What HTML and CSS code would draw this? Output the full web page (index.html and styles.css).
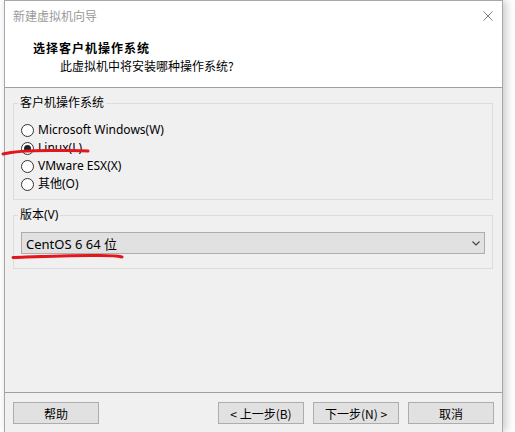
FILE: index.html
```html
<!DOCTYPE html>
<html lang="zh-CN">
<head>
<meta charset="utf-8">
<title>新建虚拟机向导</title>
<link rel="stylesheet" href="styles.css">
</head>
<body>
<div class="window">
  <div class="titlebar">
    <span class="title">新建虚拟机向导</span>
    <svg class="close" width="10" height="10" viewBox="0 0 10 10"><path d="M0.5 0.5 L9.5 9.5 M9.5 0.5 L0.5 9.5" stroke="#808080" stroke-width="1" fill="none"/></svg>
  </div>
  <div class="header">
    <div class="h-title">选择客户机操作系统</div>
    <div class="h-sub">此虚拟机中将安装哪种操作系统?</div>
  </div>
  <div class="body">
    <fieldset class="group g1">
      <legend>客户机操作系统</legend>
      <div class="radio"><span class="dot"></span>Microsoft Windows(W)</div>
      <div class="radio checked"><span class="dot"></span>Linux(L)</div>
      <div class="radio"><span class="dot"></span>VMware ESX(X)</div>
      <div class="radio"><span class="dot"></span>其他(O)</div>
    </fieldset>
    <fieldset class="group g2">
      <legend>版本(V)</legend>
      <div class="combo">
        <span>CentOS 6 64 位</span>
        <svg width="8" height="5" viewBox="0 0 8 5"><path d="M0.5 0.5 L4 4 L7.5 0.5" stroke="#404040" stroke-width="1.1" fill="none"/></svg>
      </div>
    </fieldset>
  </div>
  <div class="footer">
    <div class="btn">帮助</div>
    <div class="spacer"></div>
    <div class="btn">&lt; 上一步(B)</div>
    <div class="btn">下一步(N) &gt;</div>
    <div class="btn">取消</div>
  </div>
</div>
<svg class="marks" width="515" height="432" viewBox="0 0 515 432">
  <path d="M3 154 C15 151 30 150.5 50 150.5 C65 150.5 80 150 88 151" stroke="#e3161c" stroke-width="3" fill="none" stroke-linecap="round"/>
  <path d="M13 257.5 C40 256.5 70 255 100 255.5 C110 255.5 118 256 122 257" stroke="#e3161c" stroke-width="3" fill="none" stroke-linecap="round"/>
</svg>
</body>
</html>
```
FILE: styles.css
```css
html, body {
  margin: 0;
  padding: 0;
  background: #ffffff;
}
body {
  width: 515px;
  height: 432px;
  overflow: hidden;
  position: relative;
  font-family: "Noto Sans", "Noto Sans CJK SC", sans-serif;
  font-size: 12px;
  color: #000;
}
.window {
  margin-left: 4px;
  width: 497px;
  height: 431px;
  border: 1px solid #a8a8a8;
  border-bottom: none;
  background: #f0f0f0;
  display: flex;
  flex-direction: column;
  box-shadow: 3px 0 9px rgba(0, 0, 0, 0.22);
}
.titlebar {
  height: 30px;
  background: #fff;
  display: flex;
  align-items: center;
  justify-content: space-between;
  padding: 0 9px 0 8px;
}
.title {
  color: #9a9a9a;
  font-family: "Noto Sans CJK SC", sans-serif;
  line-height: 16px;
}
.close {
  margin-right: 0;
}
.header {
  height: 56px;
  background: #fff;
  border-bottom: 1px solid #a0a0a0;
  padding: 9px 0 0 28px;
  box-sizing: border-box;
  height: 57px;
  font-family: "Noto Sans CJK SC", sans-serif;
}
.h-title {
  font-weight: bold;
  line-height: 16px;
  letter-spacing: 1px;
}
.h-sub {
  line-height: 16px;
  margin-top: 2px;
  padding-left: 27px;
}
.body {
  flex: 1;
  padding: 7px 9px 0 8px;
  border-bottom: 1px solid #a0a0a0;
}
.group {
  margin: 0;
  border: 1px solid #dcdcdc;
  padding: 0 7px;
}
.group legend {
  padding: 0 2px;
  margin-left: -3px;
  line-height: 16px;
  color: #000;
}
.g1 {
  padding-top: 10px;
  padding-bottom: 6px;
}
.g2 {
  margin-top: 7px;
  padding-top: 9px;
  padding-bottom: 14px;
}
.radio {
  height: 18px;
  display: flex;
  align-items: center;
  gap: 4px;
  line-height: 18px;
}
.dot {
  width: 11px;
  height: 11px;
  border: 1px solid #333;
  border-radius: 50%;
  background: #fff;
  display: flex;
  align-items: center;
  justify-content: center;
  flex: none;
}
.checked .dot::after {
  content: "";
  width: 7px;
  height: 7px;
  border-radius: 50%;
  background: #222;
}
.combo {
  height: 20px;
  border: 1px solid #adadad;
  background: #e1e1e1;
  display: flex;
  align-items: center;
  justify-content: space-between;
  padding: 0 4px 0 4px;
  font-size: 13px;
}
.footer {
  height: 39px;
  display: flex;
  align-items: flex-start;
  padding: 9px 8px 0 8px;
  box-sizing: border-box;
  gap: 9px;
}
.spacer {
  flex: 1;
}
.btn {
  width: 84px;
  height: 20px;
  border: 1px solid #adadad;
  background: #e1e1e1;
  display: flex;
  align-items: center;
  justify-content: center;
  font-family: "Noto Sans CJK SC", sans-serif;
}
.marks {
  position: absolute;
  left: 0;
  top: 0;
  pointer-events: none;
}
```
